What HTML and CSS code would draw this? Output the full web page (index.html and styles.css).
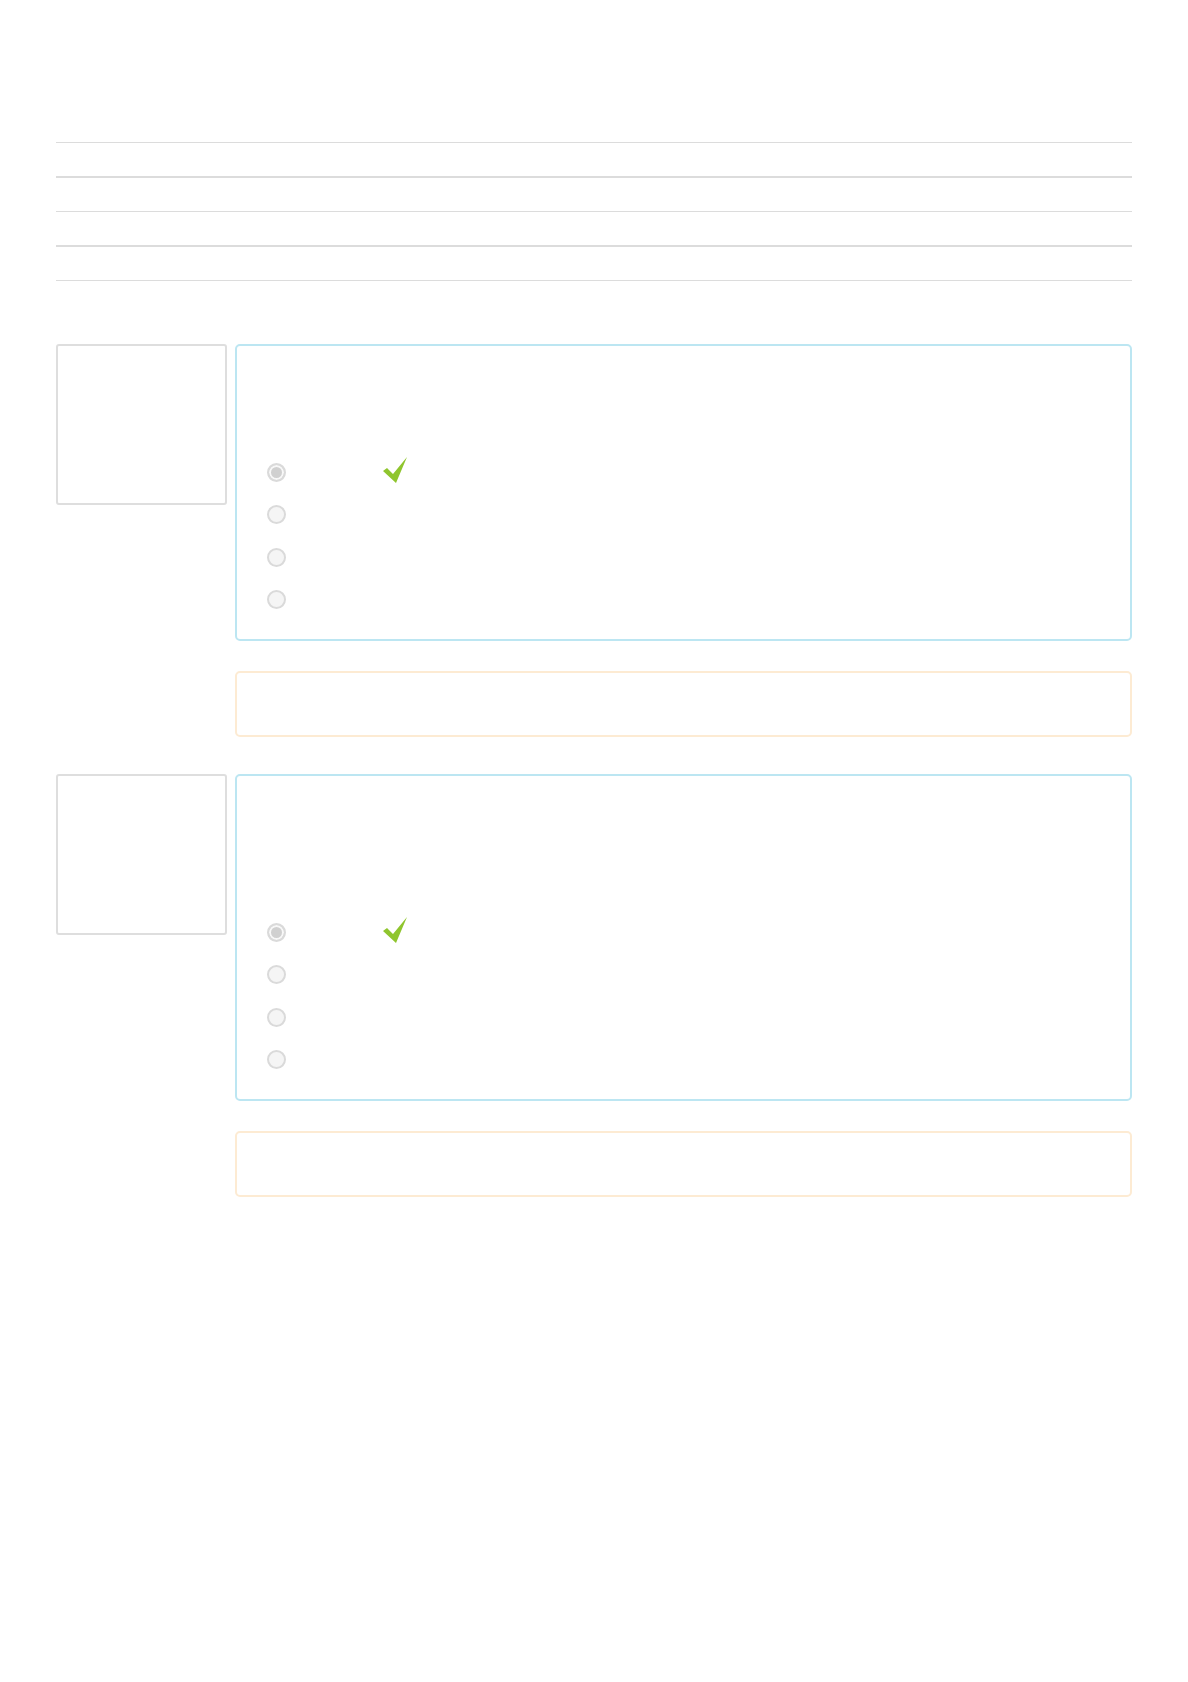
FILE: index.html
```html
<!DOCTYPE html>
<html lang="en">
<head>
    <meta charset="UTF-8">
    <meta name="viewport" content="width=device-width, initial-scale=1.0">
    <title>Quiz review</title>
    <link rel="stylesheet" href="styles.css">
</head>
<body>
    <div class="page">
        <div class="summary">
            <div class="summary-row"><span class="summary-label">Started on</span><span>Monday, 4 March 2024, 10:12 AM</span></div>
            <div class="summary-row thick"><span class="summary-label">State</span><span>Finished</span></div>
            <div class="summary-row"><span class="summary-label">Completed on</span><span>Monday, 4 March 2024, 10:15 AM</span></div>
            <div class="summary-row thick"><span class="summary-label">Time taken</span><span>3 mins 2 secs</span></div>
        </div>

        <div class="question">
            <div class="info">
                <h3 class="qno">Question 1</h3>
                <div class="state">Correct</div>
                <div class="grade">Mark 1.00 out of 1.00</div>
            </div>
            <div class="content">
                <div class="formulation">
                    <p class="qtext">What is 7 multiplied by 8?</p>
                    <div class="prompt">Select one:</div>
                    <div class="answer">
                        <input type="radio" name="q1" checked disabled>
                        <span class="answer-label">a. 56</span>
                        <svg class="tick" width="24" height="26" viewBox="0 0 24 26"><path d="M0 14 L4 11 L10 17 L24 0 L13 26 Z"/></svg>
                    </div>
                    <div class="answer">
                        <input type="radio" name="q1" disabled>
                        <span class="answer-label">b. 54</span>
                    </div>
                    <div class="answer">
                        <input type="radio" name="q1" disabled>
                        <span class="answer-label">c. 64</span>
                    </div>
                    <div class="answer">
                        <input type="radio" name="q1" disabled>
                        <span class="answer-label">d. 48</span>
                    </div>
                </div>
                <div class="feedback">The correct answer is: 56</div>
            </div>
        </div>

        <div class="question">
            <div class="info">
                <h3 class="qno">Question 2</h3>
                <div class="state">Correct</div>
                <div class="grade">Mark 1.00 out of 1.00</div>
            </div>
            <div class="content">
                <div class="formulation">
                    <p class="qtext">A train travels 120 km in 2 hours.</p>
                    <p class="qtext">What is its average speed?</p>
                    <div class="prompt">Select one:</div>
                    <div class="answer">
                        <input type="radio" name="q2" checked disabled>
                        <span class="answer-label">a. 60 km/h</span>
                        <svg class="tick" width="24" height="26" viewBox="0 0 24 26"><path d="M0 14 L4 11 L10 17 L24 0 L13 26 Z"/></svg>
                    </div>
                    <div class="answer">
                        <input type="radio" name="q2" disabled>
                        <span class="answer-label">b. 40 km/h</span>
                    </div>
                    <div class="answer">
                        <input type="radio" name="q2" disabled>
                        <span class="answer-label">c. 240 km/h</span>
                    </div>
                    <div class="answer">
                        <input type="radio" name="q2" disabled>
                        <span class="answer-label">d. 80 km/h</span>
                    </div>
                </div>
                <div class="feedback">The correct answer is: 60 km/h</div>
            </div>
        </div>
    </div>
</body>
</html>
```

FILE: styles.css
```css
body {
    font-family: "Open Sans", Arial, sans-serif;
    font-size: 15px;
    margin: 0;
    padding: 0;
    background-color: #fff;
    color: #fff; /* text is blanked out in this view */
}

.page {
    padding: 0 56px 120px;
}

/* attempt summary */
.summary {
    margin-top: 142px;
    border-bottom: 1px solid #dcdcdc;
}

.summary-row {
    display: flex;
    height: 33px;
    line-height: 33px;
    border-top: 1px solid #dcdcdc;
}

.summary-row.thick {
    border-top-width: 2px;
}

.summary-label {
    width: 200px;
    padding-left: 8px;
    font-weight: bold;
}

/* questions */
.question {
    display: grid;
    grid-template-columns: 171px 897px;
    column-gap: 8px;
    margin-top: 63px;
}

.question + .question {
    margin-top: 37px;
}

.info {
    box-sizing: border-box;
    height: 161px;
    padding: 8px 10px;
    border: 2px solid #dedede;
    border-radius: 3px;
}

.qno {
    margin: 0 0 6px;
    font-size: 15px;
}

.state,
.grade {
    font-size: 13px;
    line-height: 20px;
}

.formulation {
    padding: 20px 24px 18px 30px;
    border: 2px solid #bce6f2;
    border-radius: 5px;
}

.qtext {
    margin: 0;
    line-height: 30px;
}

.prompt {
    margin: 19px 0 12px;
    line-height: 24px;
}

.answer {
    display: flex;
    align-items: center;
    height: 42.5px;
}

.answer input {
    appearance: none;
    -webkit-appearance: none;
    box-sizing: border-box;
    width: 19px;
    height: 19px;
    margin: 0 0 0 0;
    border: 2px solid #dadada;
    border-radius: 50%;
    background-color: #f5f5f5;
}

.answer input:checked {
    background-color: #d0d0d0;
    box-shadow: inset 0 0 0 2px #f8f8f8;
}

.answer-label {
    width: 86px;
    margin-left: 11px;
    white-space: nowrap;
    overflow: hidden;
}

.tick {
    fill: #8fc52e;
    margin-top: -4px;
}

.feedback {
    box-sizing: border-box;
    height: 66px;
    margin-top: 30px;
    padding: 20px 24px;
    border: 2px solid #fdebd3;
    border-radius: 5px;
}
```
